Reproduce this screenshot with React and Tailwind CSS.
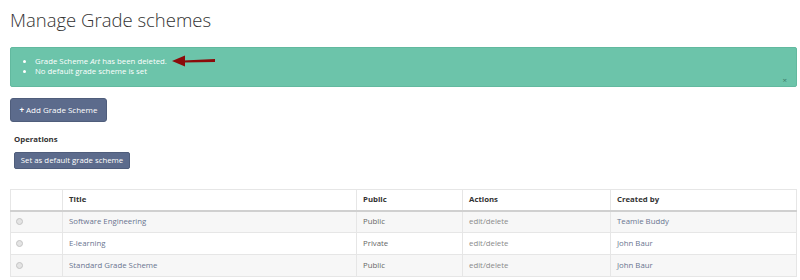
import React from "react";

const rows = [
  { title: "Software Engineering", pub: "Public", by: "Teamie Buddy" },
  { title: "E-learning", pub: "Private", by: "John Baur" },
  { title: "Standard Grade Scheme", pub: "Public", by: "John Baur" },
];

export default function App() {
  return (
    <div className="w-[800px] h-[280px] overflow-hidden bg-white px-[10px] pt-[8px] text-[#333]" style={{ fontFamily: '"Open Sans", sans-serif' }}>
      <h1 className="text-[18.5px] font-light leading-[24px] text-[#333]">Manage Grade schemes</h1>
      <div className="relative mt-[15px] h-[40px] w-[787px] rounded-[2px] border border-[#62b99f] bg-[#6cc4aa] pl-[14px] pt-[8px] text-[7.8px] leading-[10px] text-white">
        <ul className="list-disc pl-[10px]">
          <li className="relative">
            Grade Scheme <em>Art</em> has been deleted.
            <svg className="absolute left-[134px] top-[-2px]" width="48" height="14" viewBox="0 0 48 14">
              <path d="M14 6.5 L46 5 L46 8 L14 8.5 Z" fill="#8b0a0a" />
              <path d="M3 7 L16 1.5 L16 12.5 Z" fill="#8b0a0a" />
            </svg>
          </li>
          <li>No default grade scheme is set</li>
        </ul>
        <span className="absolute right-[9px] bottom-[1px] text-[8px] leading-[10px] text-[#3d7a67]">×</span>
      </div>
      <button className="mt-[11px] flex h-[24px] w-[97px] items-center justify-center rounded-[3px] border border-[#4f5d7b] bg-[#5c6b8c] text-[8px] text-white">
        <span className="mr-[2px] font-bold">+</span>Add Grade Scheme
      </button>
      <div className="mt-[12px] pl-[4px] text-[7.8px] font-bold leading-[10px] text-[#333]">Operations</div>
      <button className="ml-[4px] mt-[8px] flex h-[17px] w-[116px] items-center justify-center rounded-[2px] border border-[#4f5d7b] bg-[#5c6b8c] text-[7.8px] text-white">
        Set as default grade scheme
      </button>
      <table className="mt-[20px] w-[787px] table-fixed border-collapse border border-[#e6e6e6] text-[7.8px]">
        <colgroup>
          <col className="w-[52px]" />
          <col className="w-[294px]" />
          <col className="w-[106px]" />
          <col className="w-[148px]" />
          <col />
        </colgroup>
        <thead>
          <tr className="h-[21px] border-b-2 border-[#d0d0d0] text-left font-bold text-[#333]">
            <th className="border-r border-[#e6e6e6]"></th>
            <th className="border-r border-[#e6e6e6] px-[6px]">Title</th>
            <th className="border-r border-[#e6e6e6] px-[6px]">Public</th>
            <th className="border-r border-[#e6e6e6] px-[6px]">Actions</th>
            <th className="px-[6px]">Created by</th>
          </tr>
        </thead>
        <tbody>
          {rows.map((r, i) => (
            <tr key={i} className={`h-[22px] border-b border-[#e6e6e6] ${i % 2 === 0 ? "bg-[#f7f7f7]" : "bg-white"}`}>
              <td className="border-r border-[#e6e6e6] pl-[5px]">
                <span className="block h-[7px] w-[7px] rounded-full border border-[#c4c4c4] bg-[#e4e4e4]"></span>
              </td>
              <td className="border-r border-[#e6e6e6] px-[6px] text-[#6a7590]">{r.title}</td>
              <td className="border-r border-[#e6e6e6] px-[6px] text-[#666]">{r.pub}</td>
              <td className="border-r border-[#e6e6e6] px-[6px] text-[#8a8a8a]">edit/delete</td>
              <td className="px-[6px] text-[#6a7590]">{r.by}</td>
            </tr>
          ))}
        </tbody>
      </table>
    </div>
  );
}
